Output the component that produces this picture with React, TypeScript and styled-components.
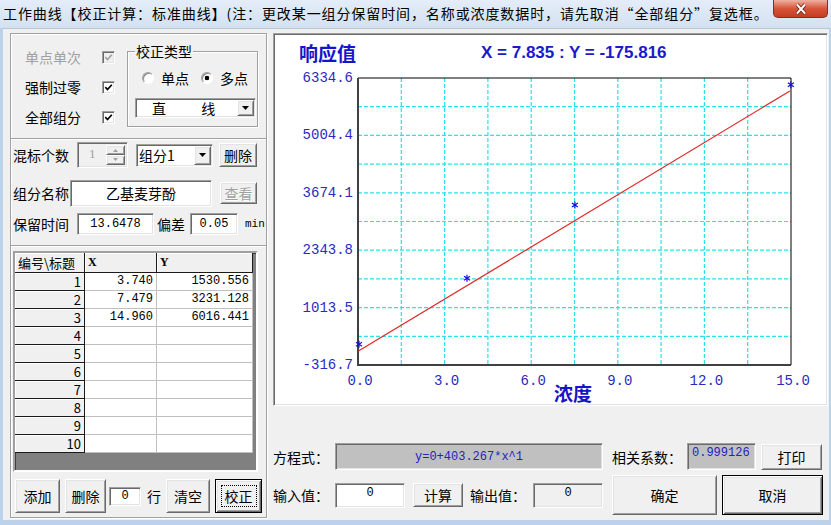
import React from "react";
import styled, { createGlobalStyle, css } from "styled-components";

const ui = `"Noto Sans CJK SC", "Liberation Sans", sans-serif`;
const mono = `"Liberation Mono", "DejaVu Sans Mono", monospace`;

const GlobalStyle = createGlobalStyle`
  html, body { margin: 0; padding: 0; background: #ffffff; }
  body { font-family: ${ui}; font-size: 14px; color: #000; }
  * { box-sizing: border-box; }
`;

const sunken = css`
  border: 1px solid;
  border-color: #a0a0a0 #ffffff #ffffff #a0a0a0;
  box-shadow: inset 1px 1px 0 #696969, inset -1px -1px 0 #e3e3e3;
`;

const raised = css`
  border: 1px solid;
  border-color: #ffffff #696969 #696969 #ffffff;
  box-shadow: inset 1px 1px 0 #e3e3e3, inset -1px -1px 0 #a0a0a0;
`;

const Window = styled.div`
  width: 831px;
  height: 525px;
  background: #bcd1ea;
  display: flex;
  flex-direction: column;
  overflow: hidden;
`;

const TitleBar = styled.div`
  height: 28px;
  flex: none;
  display: flex;
  align-items: flex-start;
  justify-content: space-between;
  padding-left: 3px;
  background: linear-gradient(#e4edf8, #d3e1f1);
`;

const TitleText = styled.div`
  font-size: 14px;
  line-height: 26px;
  letter-spacing: 0.9px;
  white-space: nowrap;
`;

const CloseBtn = styled.div`
  width: 55px;
  height: 18px;
  margin-right: 3px;
  border: 1px solid #83301f;
  border-top: none;
  border-radius: 0 0 5px 5px;
  background: linear-gradient(#eeb1a2, #d7553a 50%, #c23d22);
  display: flex;
  align-items: center;
  justify-content: center;
`;

const Client = styled.div`
  flex: 1;
  margin: 0 2px 5px 3px;
  background: #f0f0f0;
  border-top: 1px solid #b9c6d6;
  display: flex;
  gap: 6px;
  padding: 4px 0 0 7px;
`;

const LeftPanel = styled.div`
  width: 257px;
  height: 485px;
  flex: none;
  border: 1px solid #a0a0a0;
  box-shadow: inset 1px 1px 0 #fff, 1px 1px 0 #fff;
  display: flex;
  flex-direction: column;
`;

const TopSection = styled.div`
  height: 104px;
  flex: none;
  display: flex;
  padding: 8px 0 0 14px;
`;

const CheckCol = styled.div`
  width: 102px;
  display: flex;
  flex-direction: column;
`;

const CheckRow = styled.div<{ $disabled?: boolean }>`
  height: 30px;
  display: flex;
  align-items: center;
  color: ${(p) => (p.$disabled ? "#a0a0a0" : "#000")};
`;

const CheckLabel = styled.span`
  width: 77px;
  white-space: nowrap;
`;

const CheckBox = styled.span<{ $disabled?: boolean }>`
  width: 13px;
  height: 13px;
  flex: none;
  ${sunken}
  background: ${(p) => (p.$disabled ? "#f0f0f0" : "#fff")};
  display: flex;
  align-items: center;
  justify-content: center;
`;

const GroupBox = styled.div`
  position: relative;
  width: 131px;
  height: 76px;
  margin-top: 9px;
  border: 1px solid #a0a0a0;
  box-shadow: inset 1px 1px 0 #fff, 1px 1px 0 #fff;
  padding: 16px 0 0 14px;
`;

const GroupCaption = styled.span`
  position: absolute;
  left: 7px;
  top: -11px;
  padding: 0 1px;
  line-height: 20px;
  background: #f0f0f0;
`;

const RadioRow = styled.div`
  height: 20px;
  display: flex;
  align-items: center;
`;

const RadioDot = styled.span<{ $on?: boolean }>`
  width: 12px;
  height: 12px;
  flex: none;
  border-radius: 50%;
  border: 1px solid;
  border-color: #a0a0a0 #ffffff #ffffff #a0a0a0;
  box-shadow: inset 1px 1px 0 #8a8a8a;
  background: ${(p) =>
    p.$on ? "radial-gradient(circle, #000 0 2px, #fff 2.6px)" : "#fff"};
`;

const RadioText = styled.span<{ $mr?: number }>`
  margin-left: 7px;
  margin-right: ${(p) => p.$mr ?? 0}px;
`;

const Combo = styled.div<{ $w: number; $h: number; $ml?: number; $mt?: number }>`
  width: ${(p) => p.$w}px;
  height: ${(p) => p.$h}px;
  margin-left: ${(p) => p.$ml ?? 0}px;
  margin-top: ${(p) => p.$mt ?? 0}px;
  flex: none;
  ${sunken}
  background: #fff;
  display: flex;
  padding: 1px;
`;

const ComboText = styled.div<{ $pl: number; $ws?: number }>`
  flex: 1;
  padding-left: ${(p) => p.$pl}px;
  word-spacing: ${(p) => p.$ws ?? 0}px;
  display: flex;
  align-items: center;
  white-space: pre;
`;

const DropBtn = styled.div`
  width: 17px;
  ${raised}
  background: #f0f0f0;
  display: flex;
  align-items: center;
  justify-content: center;
`;

const Separator = styled.div`
  height: 2px;
  flex: none;
  border-top: 1px solid #a0a0a0;
  border-bottom: 1px solid #fff;
`;

const MidSection = styled.div`
  height: 105px;
  flex: none;
  padding-left: 2px;
  display: flex;
  flex-direction: column;
`;

const FieldRow = styled.div<{ $h: number; $mt: number }>`
  height: ${(p) => p.$h}px;
  margin-top: ${(p) => p.$mt}px;
  flex: none;
  display: flex;
  align-items: center;
`;

const Label = styled.span<{ $w?: number; $ml?: number }>`
  width: ${(p) => (p.$w ? `${p.$w}px` : "auto")};
  margin-left: ${(p) => p.$ml ?? 0}px;
  flex: none;
  white-space: nowrap;
`;

const MinLabel = styled.span`
  margin-left: 7px;
  font: 11px ${mono};
`;

const Spin = styled.div`
  width: 51px;
  height: 26px;
  flex: none;
  ${sunken}
  background: #f0f0f0;
  display: flex;
  padding: 2px;
`;

const SpinText = styled.span`
  flex: 1;
  padding: 1px 0 0 9px;
  font: 13px "Liberation Serif", serif;
  color: #a0a0a0;
`;

const SpinButtons = styled.div`
  width: 19px;
  display: flex;
  flex-direction: column;
`;

const SpinHalf = styled.div`
  flex: 1;
  ${raised}
  background: #f0f0f0;
  display: flex;
  align-items: center;
  justify-content: center;
`;

const TextBox = styled.div<{
  $w: number;
  $h: number;
  $ml?: number;
  $bg?: string;
  $color?: string;
  $align?: string;
  $valign?: string;
  $mono?: boolean;
}>`
  width: ${(p) => p.$w}px;
  height: ${(p) => p.$h}px;
  margin-left: ${(p) => p.$ml ?? 0}px;
  flex: none;
  ${sunken}
  background: ${(p) => p.$bg ?? "#fff"};
  color: ${(p) => p.$color ?? "#000"};
  display: flex;
  justify-content: ${(p) => p.$align ?? "center"};
  align-items: ${(p) => p.$valign ?? "center"};
  padding: 2px 4px;
  white-space: nowrap;
  ${(p) => p.$mono && css`font: 12px ${mono};`}
`;

const Button = styled.button<{
  $w: number;
  $h: number;
  $ml?: number;
  $disabled?: boolean;
  $default?: boolean;
}>`
  width: ${(p) => p.$w}px;
  height: ${(p) => p.$h}px;
  margin: 0 0 0 ${(p) => p.$ml ?? 0}px;
  padding: 0;
  flex: none;
  font: 14px ${ui};
  color: ${(p) => (p.$disabled ? "#a0a0a0" : "#000")};
  text-shadow: ${(p) => (p.$disabled ? "1px 1px 0 #fff" : "none")};
  background: #f0f0f0;
  display: flex;
  align-items: center;
  justify-content: center;
  ${raised}
  ${(p) =>
    p.$default &&
    css`
      border: 1px solid #000;
      box-shadow: inset 1px 1px 0 #fff, inset -1px -1px 0 #696969,
        inset 2px 2px 0 #e3e3e3, inset -2px -2px 0 #a0a0a0;
    `}
`;

const FocusRect = styled.span`
  border: 1px dotted #000;
  padding: 1px 3px;
  line-height: 18px;
`;

const GridWrap = styled.div`
  padding: 4px 0 0 2px;
  flex: none;
`;

const Grid = styled.div`
  width: 245px;
  height: 221px;
  border: 2px solid;
  border-color: #a0a0a0 #ffffff #ffffff #a0a0a0;
  box-shadow: inset 1px 1px 0 #404040;
  background: #808080;
  overflow: hidden;
`;

const Table = styled.table`
  border-collapse: separate;
  border-spacing: 0;
  table-layout: fixed;
  width: 238px;
`;

const FixedCell = styled.td<{ $left?: boolean; $serif?: boolean }>`
  height: 18px;
  padding: 0 3px;
  background: #f0f0f0;
  border-right: 1px solid #1a1a1a;
  border-bottom: 1px solid #1a1a1a;
  box-shadow: inset 1px 1px 0 #fff;
  text-align: ${(p) => (p.$left ? "left" : "right")};
  font: ${(p) =>
    p.$serif ? `bold 12px "Liberation Serif", serif` : `13px ${ui}`};
  line-height: 17px;
  white-space: nowrap;
  overflow: hidden;
`;

const DataCell = styled.td`
  height: 18px;
  padding: 0 3px;
  background: #fff;
  border-right: 1px solid #c0c0c0;
  border-bottom: 1px solid #c0c0c0;
  text-align: right;
  font: 12px ${mono};
  line-height: 17px;
`;

const ButtonBar = styled.div`
  margin-top: 7px;
  height: 34px;
  padding-left: 4px;
  display: flex;
  align-items: center;
`;

const RightColumn = styled.div`
  width: 556px;
  flex: none;
  display: flex;
  flex-direction: column;
`;

const ChartPanel = styled.div`
  width: 555px;
  height: 373px;
  flex: none;
  ${sunken}
  background: #fff;
`;

const ChartSvg = styled.svg`
  display: block;
`;

const TitleLabel = styled.text`
  font: bold 19px ${ui};
  fill: #1414c8;
`;

const CoordLabel = styled.text`
  font: bold 17px "Liberation Sans", Arial, sans-serif;
  fill: #1a1acb;
`;

const TickLabel = styled.text`
  font: 14px ${mono};
  fill: #2a2abf;
`;

const FormRow = styled.div<{ $h: number; $mt: number }>`
  height: ${(p) => p.$h}px;
  margin-top: ${(p) => p.$mt}px;
  flex: none;
  display: flex;
  align-items: center;
`;

const CheckMark = ({ gray }: { gray?: boolean }) => (
  <svg width="9" height="9" viewBox="0 0 9 9">
    <path
      d="M1.3 4.2 L3.5 6.5 L7.8 1.8"
      fill="none"
      stroke={gray ? "#a0a0a0" : "#000"}
      strokeWidth="1.7"
    />
  </svg>
);

const DownArrow = ({ color = "#000", w = 7 }: { color?: string; w?: number }) => (
  <svg width={w} height={Math.ceil(w / 2) + 1} viewBox={`0 0 ${w} ${Math.ceil(w / 2) + 1}`}>
    <path d={`M0 0 H${w} L${w / 2} ${Math.ceil(w / 2)} Z`} fill={color} />
  </svg>
);

const UpArrow = ({ color = "#a0a0a0" }: { color?: string }) => (
  <svg width="5" height="3" viewBox="0 0 5 3">
    <path d="M0 3 H5 L2.5 0 Z" fill={color} />
  </svg>
);

const PX0 = 358;
const PX1 = 791;
const PY0 = 78;
const PY1 = 365;
const XMAX = 15;
const YMIN = -316.7;
const YMAX = 6334.6;
const sx = (x: number) => PX0 + (x / XMAX) * (PX1 - PX0);
const sy = (y: number) => PY1 - ((y - YMIN) / (YMAX - YMIN)) * (PY1 - PY0);

const points: [number, number][] = [
  [0, 0],
  [3.74, 1530.556],
  [7.479, 3231.128],
  [14.96, 6016.441],
];

const yTicks = ["-316.7", "1013.5", "2343.8", "3674.1", "5004.4", "6334.6"];
const xTicks = ["0.0", "3.0", "6.0", "9.0", "12.0", "15.0"];

function Star({ x, y }: { x: number; y: number }) {
  return (
    <g stroke="#1010d8" strokeWidth="1.2">
      <line x1={x} y1={y - 3.5} x2={x} y2={y + 3.5} />
      <line x1={x - 3} y1={y - 2} x2={x + 3} y2={y + 2} />
      <line x1={x - 3} y1={y + 2} x2={x + 3} y2={y - 2} />
    </g>
  );
}

function Chart() {
  const stepX = (PX1 - PX0) / 10;
  const stepY = (PY1 - PY0) / 10;
  const grid = Array.from({ length: 9 }, (_, i) => i + 1);
  const slope = 403.267;
  return (
    <ChartSvg width="553" height="371" viewBox="274 34 553 371">
      <TitleLabel x="299" y="52" dominantBaseline="central">
        响应值
      </TitleLabel>
      <CoordLabel x="481" y="52" dominantBaseline="central">
        X = 7.835 : Y = -175.816
      </CoordLabel>
      <g stroke="#2ee0e8" strokeWidth="1.2" strokeDasharray="4 2">
        {grid.map((k) => (
          <line key={`v${k}`} x1={PX0 + k * stepX} y1={PY0} x2={PX0 + k * stepX} y2={PY1} />
        ))}
        {grid.map((k) => (
          <line key={`h${k}`} x1={PX0} y1={PY0 + k * stepY} x2={PX1} y2={PY0 + k * stepY} />
        ))}
      </g>
      <path d={`M${PX0} ${PY0} H${PX1} V${PY1}`} fill="none" stroke="#000" strokeWidth="1" />
      <path d={`M${PX0} ${PY0} V${PY1} H${PX1}`} fill="none" stroke="#404040" strokeWidth="2" />
      <line
        x1={sx(0)}
        y1={sy(0)}
        x2={sx(14.96)}
        y2={sy(slope * 14.96)}
        stroke="#e02828"
        strokeWidth="1.2"
      />
      {points.map(([x, y], i) => (
        <Star key={i} x={sx(x) + 1} y={sy(y) - 7} />
      ))}
      {yTicks.map((t, i) => (
        <TickLabel key={t} x="353" y={PY1 - i * stepY * 2} textAnchor="end" dominantBaseline="central">
          {t}
        </TickLabel>
      ))}
      {xTicks.map((t, i) => (
        <TickLabel key={t} x={PX0 + 2 + i * stepX * 2} y="381" textAnchor="middle" dominantBaseline="central">
          {t}
        </TickLabel>
      ))}
      <TitleLabel x="554" y="392" dominantBaseline="central">
        浓度
      </TitleLabel>
    </ChartSvg>
  );
}

const rows = [
  ["3.740", "1530.556"],
  ["7.479", "3231.128"],
  ["14.960", "6016.441"],
  ["", ""],
  ["", ""],
  ["", ""],
  ["", ""],
  ["", ""],
  ["", ""],
  ["", ""],
];

const checks = [
  { label: "单点单次", disabled: true },
  { label: "强制过零" },
  { label: "全部组分" },
];

export default function App() {
  return (
    <>
      <GlobalStyle />
      <Window>
        <TitleBar>
          <TitleText>
            工作曲线【校正计算：标准曲线】(注：更改某一组分保留时间，名称或浓度数据时，请先取消“全部组分”复选框。
          </TitleText>
          <CloseBtn>
            <svg width="14" height="12" viewBox="0 0 14 12">
              <path d="M3 1.5 L11 10.5 M11 1.5 L3 10.5" stroke="#5a1a10" strokeWidth="3.4" />
              <path d="M3 1.5 L11 10.5 M11 1.5 L3 10.5" stroke="#fff" strokeWidth="2" />
            </svg>
          </CloseBtn>
        </TitleBar>
        <Client>
          <LeftPanel>
            <TopSection>
              <CheckCol>
                {checks.map((c) => (
                  <CheckRow key={c.label} $disabled={c.disabled}>
                    <CheckLabel>{c.label}</CheckLabel>
                    <CheckBox $disabled={c.disabled}>
                      <CheckMark gray={c.disabled} />
                    </CheckBox>
                  </CheckRow>
                ))}
              </CheckCol>
              <GroupBox>
                <GroupCaption>校正类型</GroupCaption>
                <RadioRow>
                  <RadioDot />
                  <RadioText $mr={12}>单点</RadioText>
                  <RadioDot $on />
                  <RadioText>多点</RadioText>
                </RadioRow>
                <Combo $w={121} $h={20} $ml={-7} $mt={10}>
                  <ComboText $pl={15} $ws={32}>
                    直 线
                  </ComboText>
                  <DropBtn>
                    <DownArrow />
                  </DropBtn>
                </Combo>
              </GroupBox>
            </TopSection>
            <Separator />
            <MidSection>
              <FieldRow $h={28} $mt={1}>
                <Label $w={64}>混标个数</Label>
                <Spin>
                  <SpinText>1</SpinText>
                  <SpinButtons>
                    <SpinHalf>
                      <UpArrow />
                    </SpinHalf>
                    <SpinHalf>
                      <DownArrow color="#a0a0a0" w={5} />
                    </SpinHalf>
                  </SpinButtons>
                </Spin>
                <Combo $w={77} $h={23} $ml={8}>
                  <ComboText $pl={1}>组分1</ComboText>
                  <DropBtn>
                    <DownArrow />
                  </DropBtn>
                </Combo>
                <Button $w={38} $h={24} $ml={6}>
                  删除
                </Button>
              </FieldRow>
              <FieldRow $h={28} $mt={10}>
                <Label $w={57}>组分名称</Label>
                <TextBox $w={142} $h={27}>
                  乙基麦芽酚
                </TextBox>
                <Button $w={37} $h={22} $ml={8} $disabled>
                  查看
                </Button>
              </FieldRow>
              <FieldRow $h={24} $mt={5}>
                <Label $w={64}>保留时间</Label>
                <TextBox $w={77} $h={22} $mono>
                  13.6478
                </TextBox>
                <Label $ml={3}>偏差</Label>
                <TextBox $w={48} $h={22} $ml={5} $mono>
                  0.05
                </TextBox>
                <MinLabel>min</MinLabel>
              </FieldRow>
            </MidSection>
            <Separator />
            <GridWrap>
              <Grid>
                <Table>
                  <colgroup>
                    <col style={{ width: 70 }} />
                    <col style={{ width: 72 }} />
                    <col style={{ width: 96 }} />
                  </colgroup>
                  <tbody>
                    <tr>
                      <FixedCell $left style={{ height: 20 }}>
                        编号\标题
                      </FixedCell>
                      <FixedCell $left $serif>
                        X
                      </FixedCell>
                      <FixedCell $left $serif>
                        Y
                      </FixedCell>
                    </tr>
                    {rows.map(([x, y], i) => (
                      <tr key={i}>
                        <FixedCell>{i + 1}</FixedCell>
                        <DataCell>{x}</DataCell>
                        <DataCell>{y}</DataCell>
                      </tr>
                    ))}
                  </tbody>
                </Table>
              </Grid>
            </GridWrap>
            <ButtonBar>
              <Button $w={45} $h={34}>
                添加
              </Button>
              <Button $w={41} $h={34} $ml={5}>
                删除
              </Button>
              <TextBox $w={32} $h={19} $ml={3} $mono>
                0
              </TextBox>
              <Label $ml={6}>行</Label>
              <Button $w={44} $h={34} $ml={5}>
                清空
              </Button>
              <Button $w={47} $h={34} $ml={5} $default>
                <FocusRect>校正</FocusRect>
              </Button>
            </ButtonBar>
          </LeftPanel>
          <RightColumn>
            <ChartPanel>
              <Chart />
            </ChartPanel>
            <FormRow $h={27} $mt={37}>
              <Label $w={62}>方程式：</Label>
              <TextBox $w={268} $h={27} $bg="#c0c0c0" $color="#2323c0" $mono>
                y=0+403.267*x^1
              </TextBox>
              <Label $w={75} $ml={9}>
                相关系数：
              </Label>
              <TextBox $w={69} $h={27} $bg="#c0c0c0" $color="#2323c0" $align="flex-start" $valign="flex-start" $mono>
                0.999126
              </TextBox>
              <Button $w={61} $h={26} $ml={5}>
                打印
              </Button>
            </FormRow>
            <FormRow $h={40} $mt={5}>
              <Label $w={62}>输入值：</Label>
              <TextBox $w={70} $h={25} $valign="flex-start" $mono>
                0
              </TextBox>
              <Button $w={50} $h={24} $ml={8}>
                计算
              </Button>
              <Label $w={63} $ml={7}>
                输出值：
              </Label>
              <TextBox $w={70} $h={25} $bg="#f0f0f0" $valign="flex-start" $mono>
                0
              </TextBox>
              <Button $w={105} $h={40} $ml={9}>
                确定
              </Button>
              <Button $w={101} $h={40} $ml={5} $default>
                取消
              </Button>
            </FormRow>
          </RightColumn>
        </Client>
      </Window>
    </>
  );
}
